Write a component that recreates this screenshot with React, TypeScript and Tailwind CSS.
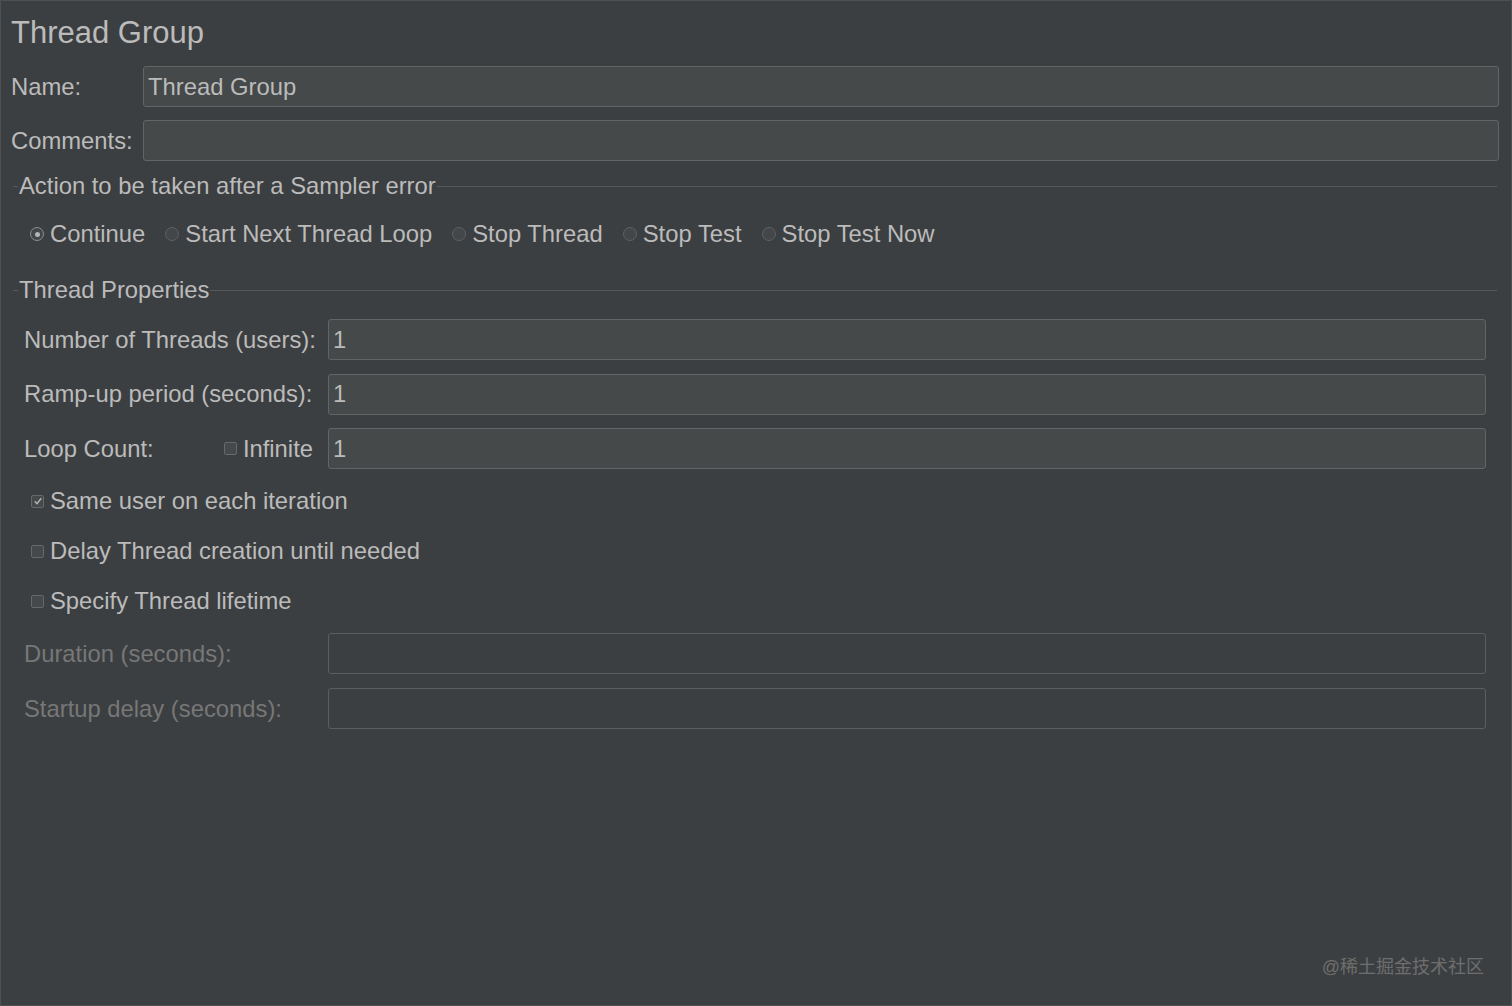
import React from "react";

const FONT = { fontFamily: '"Liberation Sans", Arial, sans-serif' };

function Field({ value = "", disabled = false }: { value?: string; disabled?: boolean }) {
  return (
    <div
      className={
        "flex h-[41px] flex-1 items-center rounded-[3px] border pl-[4px] text-[23.8px] " +
        (disabled ? "border-[#5a5e60] bg-[#3c3f41]" : "border-[#626566] bg-[#45494a] text-[#bbbbbb]")
      }
    >
      {value}
    </div>
  );
}

function TitledLine({ title }: { title: string }) {
  return (
    <div className="ml-[12px] mr-[14px] flex h-[28px] items-center">
      <div className="h-px w-[5px] bg-[#55595b]" />
      <span className="px-[1px] text-[23.8px] leading-[28px] text-[#bbbbbb]">{title}</span>
      <div className="h-px flex-1 bg-[#55595b]" />
    </div>
  );
}

function Radio({ label, checked = false }: { label: string; checked?: boolean }) {
  return (
    <div className="flex items-center">
      <div
        className={
          "mr-[6px] flex h-[14px] w-[14px] items-center justify-center rounded-full border bg-[#43474a] " +
          (checked ? "border-[#8c8f90]" : "border-[#5d6163]")
        }
      >
        {checked && <div className="h-[5px] w-[5px] rounded-full bg-[#b5b5b5]" />}
      </div>
      <span className="text-[23.8px] leading-[28px] text-[#bbbbbb]">{label}</span>
    </div>
  );
}

function Check({ checked = false }: { checked?: boolean }) {
  return (
    <div className="flex h-[13px] w-[13px] items-center justify-center rounded-[2px] border border-[#66696b] bg-[#45494a]">
      {checked && (
        <svg width="10" height="10" viewBox="0 0 10 10">
          <path d="M1.8 5.2 L4 7.6 L8.3 2.2" fill="none" stroke="#b8b8b8" strokeWidth="1.4" />
        </svg>
      )}
    </div>
  );
}

function CheckRow({ label, checked = false }: { label: string; checked?: boolean }) {
  return (
    <div className="flex h-[28px] items-center pl-[30px]">
      <Check checked={checked} />
      <span className="ml-[6px] text-[23.8px] leading-[28px] text-[#bbbbbb]">{label}</span>
    </div>
  );
}

function PropRow({ label, value, disabled = false }: { label: string; value?: string; disabled?: boolean }) {
  return (
    <div className="flex items-center pl-[23px] pr-[25px]">
      <span className={"w-[304px] text-[23.8px] " + (disabled ? "text-[#777777]" : "text-[#bbbbbb]")}>{label}</span>
      <Field value={value} disabled={disabled} />
    </div>
  );
}

export default function App() {
  return (
    <div
      className="relative h-[1006px] w-[1512px] overflow-hidden border border-[#4d5153] bg-[#3c3f41] text-[#bbbbbb]"
      style={FONT}
    >
      {/* Header */}
      <div className="pl-[10px] pt-[14px] text-[31px] leading-[35px]">Thread Group</div>

      <div className="mt-[16px] flex flex-col gap-[13px] pl-[10px] pr-[12px]">
        <div className="flex items-center">
          <span className="w-[132px] text-[23.8px]">Name:</span>
          <Field value="Thread Group" />
        </div>
        <div className="flex items-center">
          <span className="w-[132px] text-[23.8px]">Comments:</span>
          <Field />
        </div>
      </div>

      {/* Sampler error action */}
      <div className="mt-[11px]">
        <TitledLine title="Action to be taken after a Sampler error" />
      </div>
      <div className="mt-[20px] flex items-center gap-[20px] pl-[29px]">
        <Radio label="Continue" checked />
        <Radio label="Start Next Thread Loop" />
        <Radio label="Stop Thread" />
        <Radio label="Stop Test" />
        <Radio label="Stop Test Now" />
      </div>

      {/* Thread properties */}
      <div className="mt-[28px]">
        <TitledLine title="Thread Properties" />
      </div>

      <div className="mt-[15px] flex flex-col gap-[13.5px]">
        <PropRow label="Number of Threads (users):" value="1" />
        <PropRow label="Ramp-up period (seconds):" value="1" />
        <div className="flex items-center pl-[23px] pr-[25px]">
          <div className="flex w-[304px] items-center">
            <span className="flex-1 text-[23.8px]">Loop Count:</span>
            <Check />
            <span className="ml-[6px] mr-[15px] text-[23.8px]">Infinite</span>
          </div>
          <Field value="1" />
        </div>
      </div>

      <div className="mt-[18px] flex flex-col gap-[22px]">
        <CheckRow label="Same user on each iteration" checked />
        <CheckRow label="Delay Thread creation until needed" />
        <CheckRow label="Specify Thread lifetime" />
      </div>

      <div className="mt-[18px] flex flex-col gap-[14px]">
        <PropRow label="Duration (seconds):" disabled />
        <PropRow label="Startup delay (seconds):" disabled />
      </div>

      <div
        className="absolute bottom-[26px] right-[27px] text-[18px] leading-[24px] text-[#6e6e6e]"
        style={{ fontFamily: '"Liberation Sans", "Noto Sans CJK SC", sans-serif' }}
      >
        @稀土掘金技术社区
      </div>
    </div>
  );
}
